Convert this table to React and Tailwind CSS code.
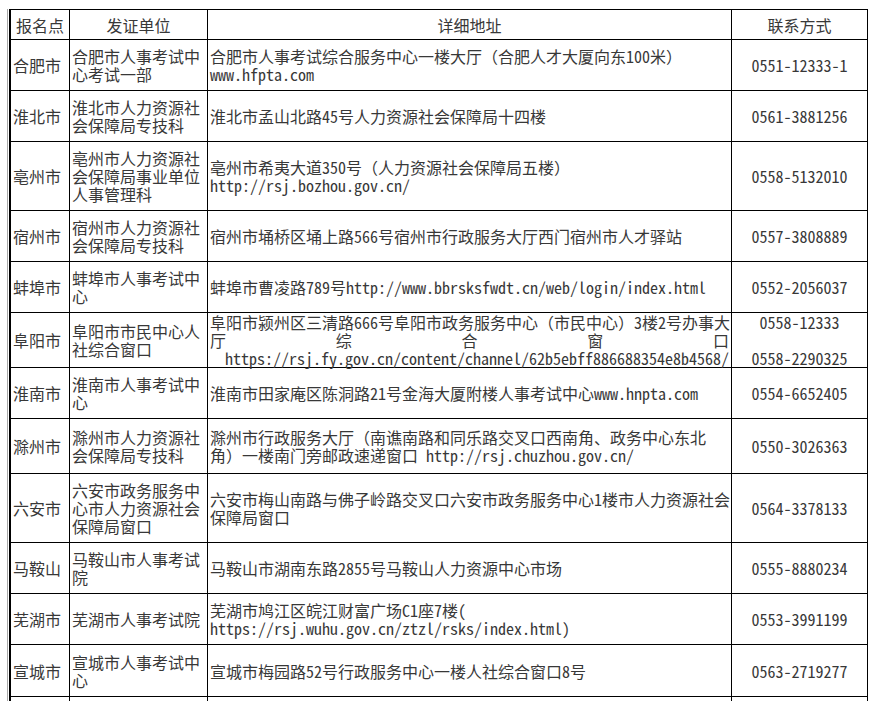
import React from 'react';

const rows = [
  { h: 51, city: '合肥市', org: '合肥市人事考试中心考试一部', addr: ['合肥市人事考试综合服务中心一楼大厅（合肥人才大厦向东100米）', 'www.hfpta.com'], tel: ['0551-12333-1'] },
  { h: 51, city: '淮北市', org: '淮北市人力资源社会保障局专技科', addr: ['淮北市孟山北路45号人力资源社会保障局十四楼'], tel: ['0561-3881256'] },
  { h: 69, city: '亳州市', org: '亳州市人力资源社会保障局事业单位人事管理科', addr: ['亳州市希夷大道350号（人力资源社会保障局五楼）', 'http://rsj.bozhou.gov.cn/'], tel: ['0558-5132010'] },
  { h: 51, city: '宿州市', org: '宿州市人力资源社会保障局专技科', addr: ['宿州市埇桥区埇上路566号宿州市行政服务大厅西门宿州市人才驿站'], tel: ['0557-3808889'] },
  { h: 51, city: '蚌埠市', org: '蚌埠市人事考试中心', addr: ['蚌埠市曹凌路789号http://www.bbrsksfwdt.cn/web/login/index.html'], tel: ['0552-2056037'] },
  { h: 55, city: '阜阳市', org: '阜阳市市民中心人社综合窗口', fuyang: true, tel: ['0558-12333', '\u00a0', '0558-2290325'] },
  { h: 51, city: '淮南市', org: '淮南市人事考试中心', addr: ['淮南市田家庵区陈洞路21号金海大厦附楼人事考试中心www.hnpta.com'], tel: ['0554-6652405'] },
  { h: 55, city: '滁州市', org: '滁州市人力资源社会保障局专技科', addr: ['滁州市行政服务大厅（南谯南路和同乐路交叉口西南角、政务中心东北', '角）一楼南门旁邮政速递窗口 http://rsj.chuzhou.gov.cn/'], tel: ['0550-3026363'] },
  { h: 69, city: '六安市', org: '六安市政务服务中心市人力资源社会保障局窗口', addr: ['六安市梅山南路与佛子岭路交叉口六安市政务服务中心1楼市人力资源社会', '保障局窗口'], tel: ['0564-3378133'] },
  { h: 51, city: '马鞍山', org: '马鞍山市人事考试院', addr: ['马鞍山市湖南东路2855号马鞍山人力资源中心市场'], tel: ['0555-8880234'] },
  { h: 51, city: '芜湖市', org: '芜湖市人事考试院', addr: ['芜湖市鸠江区皖江财富广场C1座7楼(', 'https://rsj.wuhu.gov.cn/ztzl/rsks/index.html)'], tel: ['0553-3991199'] },
  { h: 52, city: '宣城市', org: '宣城市人事考试中心', addr: ['宣城市梅园路52号行政服务中心一楼人社综合窗口8号'], tel: ['0563-2719277'] },
  // next row starts just under the bottom edge of the shot
  { h: 51, city: '\u00a0', org: '\u00a0', addr: ['\u00a0'], tel: ['\u00a0'] },
];

const cell = 'border-r border-b border-black px-[2px] py-0 align-middle';

const App = () => {
  return (
    <div className="w-[874px] h-[701px] overflow-hidden bg-white text-[#383838] text-[16px] leading-[18px] [font-family:'Noto_Sans_Mono_CJK_SC','Noto_Sans_CJK_SC',monospace]">
      <div className="ml-[7px] mt-[9px] border-l border-[#a8a8a8] pl-[1px]">
        <table className="border-separate border-spacing-0 table-fixed w-[859px] border-t border-l-2 border-black">
          <colgroup>
            <col className="w-[59px]" />
            <col className="w-[138px]" />
            <col className="w-[524px]" />
            <col className="w-[136px]" />
          </colgroup>
          <thead>
            <tr className="h-[30px]">
              <th className={`${cell} font-normal text-center`}>报名点</th>
              <th className={`${cell} font-normal text-center`}>发证单位</th>
              <th className={`${cell} font-normal text-center`}>详细地址</th>
              <th className={`${cell} font-normal text-center`}>联系方式</th>
            </tr>
          </thead>
          <tbody>
            {rows.map((r, i) => (
              <tr key={i} style={{ height: r.h }}>
                <td className={`${cell} whitespace-nowrap`}>{r.city}</td>
                <td className={`${cell} break-all`}>{r.org}</td>
                <td className={cell}>
                  {r.fuyang ? (
                    <div>
                      <div className="whitespace-nowrap">阜阳市颍州区三清路666号阜阳市政务服务中心（市民中心）3楼2号办事大</div>
                      <div className="flex justify-between">
                        <span>厅</span><span>综</span><span>合</span><span>窗</span><span>口</span>
                      </div>
                      <div className="whitespace-nowrap text-right">https://rsj.fy.gov.cn/content/channel/62b5ebff886688354e8b4568/</div>
                    </div>
                  ) : (
                    r.addr.map((line, j) => (
                      <div key={j} className="whitespace-nowrap">{line}</div>
                    ))
                  )}
                </td>
                <td className={`${cell} text-center`}>
                  {r.tel.map((t, j) => (
                    <div key={j}>{t}</div>
                  ))}
                </td>
              </tr>
            ))}
          </tbody>
        </table>
      </div>
    </div>
  );
};

export default App;
